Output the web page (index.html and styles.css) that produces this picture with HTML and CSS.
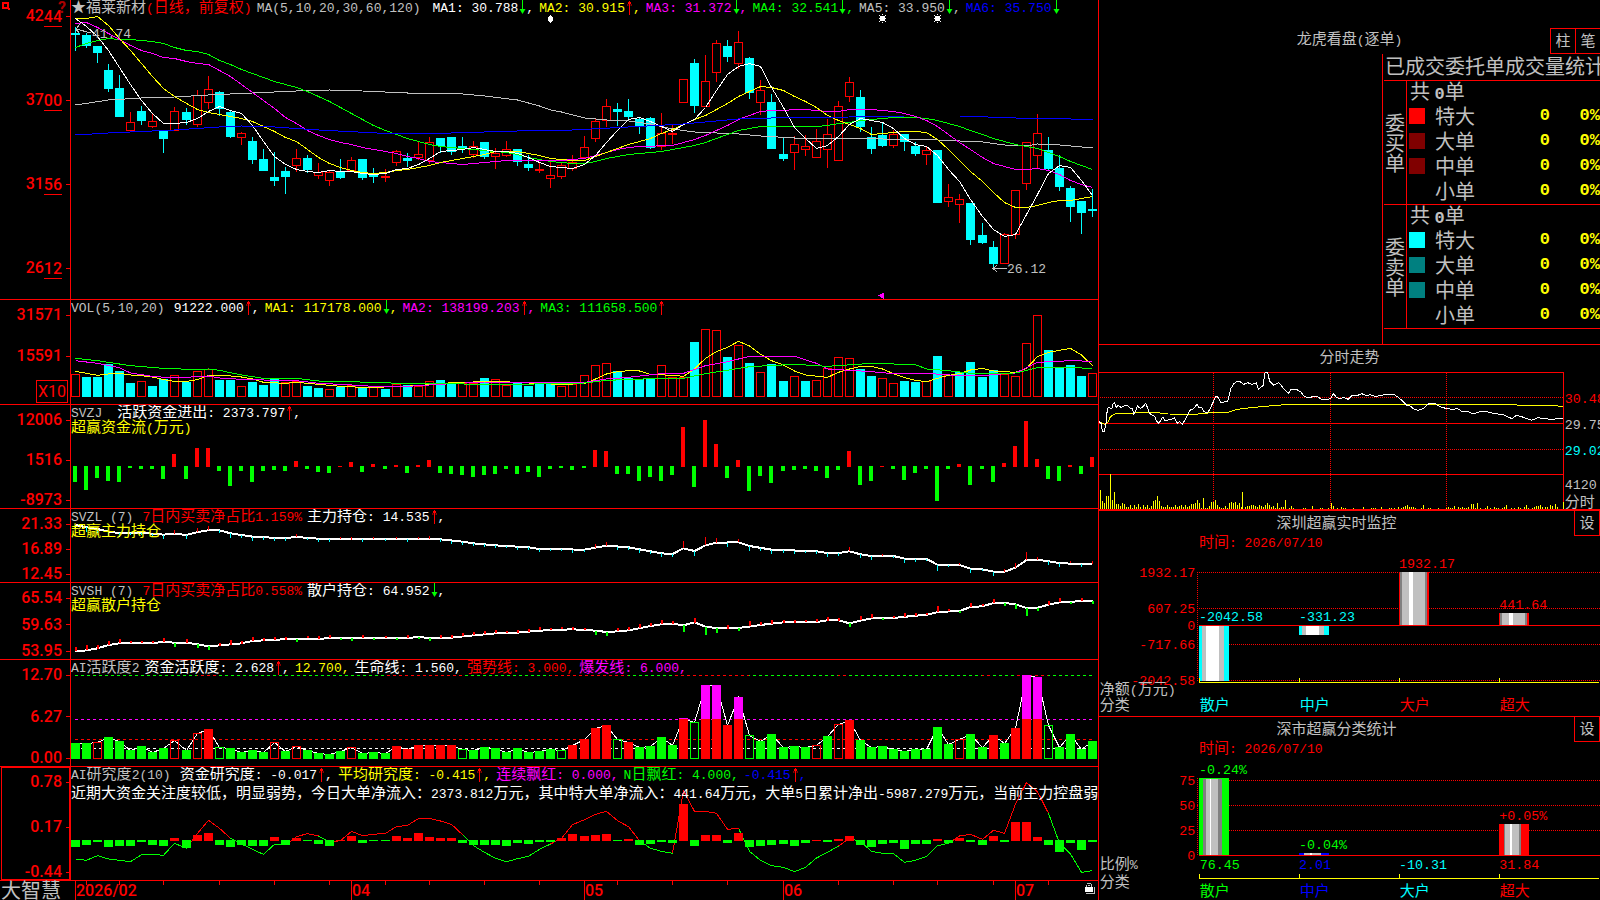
FILE: index.html
```html
<!DOCTYPE html>
<html lang="zh-CN">
<head>
<meta charset="utf-8">
<title>福莱新材</title>
<link rel="stylesheet" href="styles.css">
</head>
<body>
<svg class="defs" aria-hidden="true">
  <symbol id="up" viewBox="0 0 8 16"><path d="M4.500 1v14M3 2.500h3M2 5h1.500M5.500 5h1.500M3 3.500h3" stroke="#f00" fill="none"/></symbol>
  <symbol id="down" viewBox="0 0 8 16"><path d="M4.500 0v13" stroke="#0f0"/><path d="M1.500 9h6l-3 5z" fill="#0f0"/></symbol>
</svg>
<main class="terminal">
  <section class="charts">
    <article class="panel">
      <div class="axis axis-price">
        <svg class="corner" viewBox="0 0 9 9"><path d="M2 2h5v5H2zM7 8h2" fill="none" stroke="#f00" stroke-width="2"/></svg>
        <span class="help">?</span>
        <span class="tick">42<u>44</u></span><span class="tick">37<u>00</u></span><span class="tick">31<u>56</u></span><span class="tick">26<u>12</u></span>
      </div>
      <svg class="plot" id="price" viewBox="71 0 1027 299" preserveAspectRatio="none"></svg>
      <header class="legend">
        <span class="silver stock"><b class="z">★福莱新材</b><i class="red">(<b class="z">日线，前复权</b>)</i></span>
        <span class="silver name">MA(5,10,20,30,60,120)</span>
        <span class="white">MA1: 30.788<svg class="arrow"><use href="#down"/></svg>,</span>
        <span class="yellow">MA2: 30.915<svg class="arrow"><use href="#up"/></svg>,</span>
        <span class="magenta">MA3: 31.372<svg class="arrow"><use href="#down"/></svg>,</span>
        <span class="green">MA4: 32.541<svg class="arrow"><use href="#down"/></svg>,</span>
        <span class="silver">MA5: 33.950<svg class="arrow"><use href="#down"/></svg>,</span>
        <span class="blue">MA6: 35.750<svg class="arrow"><use href="#down"/></svg></span>
      </header>
    </article>
    <article class="panel">
      <div class="axis axis-volume"><span class="tick">31571</span><span class="tick">15591</span><span class="unit">X10</span></div>
      <svg class="plot" id="volume" viewBox="71 300 1027 104" preserveAspectRatio="none"></svg>
      <header class="legend">
        <span class="silver name">VOL(5,10,20)</span>
        <span class="white">91222.000<svg class="arrow"><use href="#up"/></svg>,</span>
        <span class="yellow">MA1: 117178.000<svg class="arrow"><use href="#down"/></svg>,</span>
        <span class="magenta">MA2: 138199.203<svg class="arrow"><use href="#up"/></svg>,</span>
        <span class="green">MA3: 111658.500<svg class="arrow"><use href="#up"/></svg></span>
      </header>
    </article>
    <article class="panel">
      <div class="axis"><span class="tick">12006</span><span class="tick">1516</span><span class="tick">-8973</span></div>
      <svg class="plot" id="flow" viewBox="71 405 1027 103" preserveAspectRatio="none"></svg>
      <header class="legend">
        <span class="silver name wide">SVZJ</span>
        <span class="white"><b class="z">活跃资金进出</b>: 2373.797<svg class="arrow"><use href="#up"/></svg>,</span>
        <span class="sub yellow"><b class="z">超赢资金流</b>(<b class="z">万元</b>)</span>
      </header>
    </article>
    <article class="panel">
      <div class="axis"><span class="tick">21.33</span><span class="tick">16.89</span><span class="tick">12.45</span></div>
      <svg class="plot" id="main" viewBox="71 509 1027 73" preserveAspectRatio="none"></svg>
      <header class="legend">
        <span class="silver name">SVZL (7)</span>
        <span class="red">7<b class="z">日内买卖净占比</b>1.159%</span>
        <span class="white"><b class="z">主力持仓</b>: 14.535<svg class="arrow"><use href="#up"/></svg>,</span>
        <span class="sub yellow"><b class="z">超赢主力持仓</b></span>
      </header>
    </article>
    <article class="panel">
      <div class="axis"><span class="tick">65.54</span><span class="tick">59.63</span><span class="tick">53.95</span></div>
      <svg class="plot" id="retail" viewBox="71 583 1027 76" preserveAspectRatio="none"></svg>
      <header class="legend">
        <span class="silver name">SVSH (7)</span>
        <span class="red">7<b class="z">日内买卖净占比</b>0.558%</span>
        <span class="white"><b class="z">散户持仓</b>: 64.952<svg class="arrow"><use href="#down"/></svg>,</span>
        <span class="sub yellow"><b class="z">超赢散户持仓</b></span>
      </header>
    </article>
    <article class="panel">
      <div class="axis"><span class="tick">12.70</span><span class="tick">6.27</span><span class="tick">0.00</span></div>
      <svg class="plot" id="active" viewBox="71 660 1027 106" preserveAspectRatio="none"></svg>
      <header class="legend">
        <span class="silver">AI<b class="z">活跃度</b>2</span>
        <span class="white"><b class="z">资金活跃度</b>: 2.628<svg class="arrow"><use href="#up"/></svg>,</span>
        <span class="yellow">12.700,</span>
        <span class="white"><b class="z">生命线</b>: 1.560,</span>
        <span class="red"><b class="z">强势线</b>: 3.000,</span>
        <span class="magenta"><b class="z">爆发线</b>: 6.000,</span>
      </header>
    </article>
    <article class="panel">
      <div class="axis selected"><span class="tick">0.78</span><span class="tick">0.17</span><span class="tick">-0.44</span></div>
      <svg class="plot" id="research" viewBox="71 767 1027 113" preserveAspectRatio="none"></svg>
      <header class="legend">
        <span class="silver name">AI<b class="z">研究度</b>2(10)</span>
        <span class="white"><b class="z">资金研究度</b>: -0.017<svg class="arrow"><use href="#up"/></svg>,</span>
        <span class="yellow"><b class="z">平均研究度</b>: -0.415<svg class="arrow"><use href="#up"/></svg>,</span>
        <span class="magenta"><b class="z">连续飘红</b>: 0.000,</span>
        <span class="green">N<b class="z">日飘红</b>: 4.000,</span>
        <span class="blue">-0.415<svg class="arrow"><use href="#up"/></svg>,</span>
        <p class="sub note white"><b class="z">近期大资金关注度较低，明显弱势，今日大单净流入：</b>2373.812<b class="z">万元，其中特大单净流入：</b>441.64<b class="z">万元，大单</b>5<b class="z">日累计净出</b>-5987.279<b class="z">万元，当前主力控盘弱</b></p>
      </header>
    </article>
    <footer class="timeline">
      <span class="brand">大智慧</span>
      <svg class="plot" id="dates" viewBox="71 881 1027 19" preserveAspectRatio="none"></svg>
    </footer>
  </section>

  <aside class="side">
    <section class="orders">
      <header class="orders-head">
        <h2><b class="z">龙虎看盘</b>(<b class="z">逐单</b>)</h2>
        <div class="buttons"><button type="button">柱</button><button type="button">笔</button></div>
      </header>
      <div class="stats">
        <h3>已成交委托单成交量统计</h3>
        <table>
          <tbody>
            <tr><th rowspan="5" class="group">委买单</th><td colspan="4" class="total">共 <b>0</b>单</td></tr>
            <tr><td class="sw"><i class="swatch s-red"></i></td><td>特大</td><td class="num">0</td><td class="num">0%</td></tr>
            <tr><td class="sw"><i class="swatch s-dark"></i></td><td>大单</td><td class="num">0</td><td class="num">0%</td></tr>
            <tr><td class="sw"><i class="swatch s-dark"></i></td><td>中单</td><td class="num">0</td><td class="num">0%</td></tr>
            <tr class="last"><td></td><td>小单</td><td class="num">0</td><td class="num">0%</td></tr>
          </tbody>
          <tbody>
            <tr><th rowspan="5" class="group">委卖单</th><td colspan="4" class="total">共 <b>0</b>单</td></tr>
            <tr><td class="sw"><i class="swatch s-cyan"></i></td><td>特大</td><td class="num">0</td><td class="num">0%</td></tr>
            <tr><td class="sw"><i class="swatch s-teal"></i></td><td>大单</td><td class="num">0</td><td class="num">0%</td></tr>
            <tr><td class="sw"><i class="swatch s-teal"></i></td><td>中单</td><td class="num">0</td><td class="num">0%</td></tr>
            <tr class="last"><td></td><td>小单</td><td class="num">0</td><td class="num">0%</td></tr>
          </tbody>
        </table>
      </div>
    </section>

    <section class="intraday">
      <h2 class="z">分时走势</h2>
      <svg class="chart" viewBox="12 93 1503 414" preserveAspectRatio="none">
        <g class="grid"><path d="M12 97.500H1405.500V507M12 250.500H1405M12 403.500H1405"/></g>
        <g class="dots"><path d="M15 172.500H1405M15 328.500H1405M355.500 99V507M706.500 99V507M1054.500 99V507"/></g>
        <g id="ticks" class="vol"></g>
        <polyline class="l yellow-l" points="12,245 24,250 32,254 40,244 46,230 60,222 80,221 110,220 130,217 180,217 220,222 300,223 350,218 400,217 420,210 440,206 500,200 580,193 760,192 1000,192 1250,194 1300,197 1380,197 1404,200"/>
        <polyline class="l white-l" points="12,245 18,250 22,274 28,274 34,245 37,205 42,203 50,207 54,193 58,188 64,202 70,196 78,202 88,197 98,197 106,206 112,206 116,222 122,212 127,198 136,205 144,200 152,190 157,202 164,220 172,226 180,230 184,242 192,250 204,230 210,242 230,237 238,234 246,250 254,245 262,252 270,240 278,224 286,210 296,206 306,192 312,204 320,203 326,214 336,219 342,212 350,196 362,170 368,171 378,188 398,184 404,160 408,145 416,132 424,125 434,124 446,133 458,128 470,133 484,129 490,148 504,137 510,98 518,98 524,124 536,135 552,128 566,146 580,160 588,149 606,149 618,156 628,170 640,173 664,168 680,178 696,180 708,174 716,160 724,172 735,176 746,172 760,178 772,166 784,168 800,161 816,167 826,164 842,170 858,166 870,164 896,163 910,172 926,186 936,196 946,198 956,207 970,211 984,206 1000,192 1020,190 1034,200 1056,206 1074,208 1088,206 1102,215 1122,216 1136,222 1152,216 1176,215 1196,220 1224,224 1236,230 1252,236 1264,226 1280,230 1296,236 1310,241 1328,233 1350,236 1370,238 1388,236 1404,236"/>
        <g class="t">
          <text x="1409" y="188" fill="#f00">30.48</text><text x="1409" y="266" fill="#c0c0c0">29.75</text><text x="1409" y="344" fill="#0ff">29.02</text>
          <text x="1409" y="446" fill="#c0c0c0">4120</text><text x="1409" y="500" class="cn" fill="#c0c0c0">分时</text>
        </g>
      </svg>
    </section>

    <section class="monitor">
      <header class="mon-head"><h2 class="z">深圳超赢实时监控</h2><button type="button">设</button></header>
      <p class="when"><b class="z">时间</b>: 2026/07/10</p>
      <svg class="chart" viewBox="12 135 1503 483" preserveAspectRatio="none">
        <g class="dots"><path d="M306 187.500H1515M306 295.500H1515M306 403.500H1515M306 511.500H1515M307.500 187V511"/></g>
        <g>
          <path fill="#0ff" d="M312 348h90v165h-90zM612 348h90v27h-90z"/>
          <path fill="#c0c0c0" d="M321 348h66v165h-66zM621 348h66v27h-66z"/>
          <path fill="#fff" d="M333 348h39v165h-39zM633 348h39v27h-39z"/>
          <path fill="#f00" d="M912 186h90v160h-90zM1212 309h90v37h-90z"/>
          <path fill="#808080" d="M915 186h81v160h-81zM1215 309h81v37h-81z"/>
          <path fill="#c0c0c0" d="M921 186h69v160h-69zM1221 309h69v37h-69z"/>
          <path fill="#fff" d="M942 186h12v160h-12zM1242 309h12v37h-12z"/>
        </g>
        <g class="grid"><path d="M312 346.500H1515"/></g>
        <path class="l yellow-l" d="M313.500 504V517.500H1512M613.500 504v13M913.500 504v13M1213.500 504v13"/>
        <g class="t">
          <g fill="#f00" text-anchor="end"><text x="301" y="202">1932.17</text><text x="301" y="309">607.25</text><text x="301" y="361">0</text><text x="301" y="417">-717.66</text><text x="301" y="526">-2042.58</text></g>
          <g fill="#0ff"><text x="312" y="334">-2042.58</text><text x="612" y="334">-331.23</text><text class="cn" x="314" y="600">散户</text><text class="cn" x="614" y="600">中户</text></g>
          <g fill="#f00"><text x="912" y="175">1932.17</text><text x="1213" y="298">441.64</text><text class="cn" x="914" y="600">大户</text><text class="cn" x="1214" y="600">超大</text></g>
          <g fill="#c0c0c0" class="cn"><text x="14" y="553">净额<tspan class="en">(</tspan>万元<tspan class="en">)</tspan></text><text x="14" y="600">分类</text></g>
        </g>
      </svg>
    </section>

    <section class="monitor">
      <header class="mon-head"><h2 class="z">深市超赢分类统计</h2><button type="button">设</button></header>
      <p class="when"><b class="z">时间</b>: 2026/07/10</p>
      <svg class="chart" viewBox="12 753 1503 417" preserveAspectRatio="none">
        <g class="dots"><path d="M306 811.500H1515M306 886.500H1515M306 961.500H1515M307.500 804V1036"/></g>
        <g>
          <path fill="#0f0" d="M312 804h90v232h-90z"/><path fill="#808080" d="M324 807h57v229h-57z"/><path fill="#c0c0c0" d="M333 807h36v229h-36z"/><path fill="#fff" d="M345 807h4v229h-4z"/>
          <path fill="#00f" d="M612 1029h90v7h-90z"/><path fill="#c0c0c0" d="M627 1029h51v7h-51z"/><path fill="#fff" d="M645 1029h6v7h-6z"/>
          <path fill="#f00" d="M1212 942h90v94h-90z"/><path fill="#808080" d="M1227 942h51v94h-51z"/><path fill="#c0c0c0" d="M1230 942h42v94h-42z"/><path fill="#fff" d="M1245 942h6v94h-6z"/>
        </g>
        <g class="grid"><path d="M312 1036.500H1515"/></g>
        <path class="l yellow-l" d="M313.500 1092V1105.500H1512M613.500 1092v13M913.500 1092v13M1213.500 1092v13"/>
        <g class="t">
          <g fill="#f00" text-anchor="end"><text x="301" y="826">75</text><text x="301" y="901">50</text><text x="301" y="976">25</text><text x="301" y="1051">0</text></g>
          <g fill="#0f0"><text x="312" y="792">-0.24%</text><text x="612" y="1018">-0.04%</text><text x="314" y="1078">76.45</text><text class="cn" x="314" y="1158">散户</text></g>
          <g fill="#00f"><text x="612" y="1078">2.01</text><text class="cn" x="614" y="1158">中户</text></g>
          <g fill="#0ff"><text x="912" y="1078">-10.31</text><text class="cn" x="914" y="1158">大户</text></g>
          <g fill="#f00"><text x="1213" y="930">+0.05%</text><text x="1213" y="1078">31.84</text><text class="cn" x="1214" y="1158">超大</text></g>
          <g fill="#c0c0c0" class="cn"><text x="14" y="1078">比例<tspan class="en">%</tspan></text><text x="14" y="1131">分类</text></g>
        </g>
      </svg>
    </section>
  </aside>
</main>
<script src="charts.js"></script>
</body>
</html>
```

FILE: styles.css
```css
* { box-sizing: border-box; }
body {
  margin: 0;
  background: #000;
  color: #c0c0c0;
  font: 13px/18px "Liberation Mono", "Noto Sans CJK SC", monospace;
  overflow: hidden;
}
h2, h3, p { margin: 0; font-weight: normal; font-size: 13px; }
i { font-style: normal; }
.defs { display: none; }
.z { font: 15px/1px "Noto Sans CJK SC", sans-serif; }
h2.z { font-size: 15px; }

.terminal {
  display: grid;
  grid-template-columns: minmax(0, 1099fr) minmax(0, 501fr);
  height: 100vh;
}

/* indicator panels */
.charts {
  display: grid;
  grid-template-rows: 300fr 105fr 104fr 74fr 77fr 107fr 114fr 19fr;
  border-right: 1px solid #f00;
  min-width: 0;
}
.panel {
  display: grid;
  grid-template: minmax(0, 1fr) / 71px minmax(0, 1fr);
  border-bottom: 1px solid #f00;
  min-height: 0;
}
.axis {
  position: relative;
  display: flex;
  flex-direction: column;
  align-items: flex-end;
  justify-content: space-between;
  padding-top: 7px;
  border-right: 1px solid #f00;
  color: #f00;
  font: 500 16px/16px Roboto, "Liberation Sans", sans-serif;
}
.axis-price { padding: 8px 0 23px; }
.axis-volume { justify-content: flex-start; }
.axis-volume .tick { margin-bottom: 25px; }
.axis-volume .tick + .tick { margin-bottom: 16px; }
.tick { display: flex; align-items: center; height: 16px; }
.tick::after {
  content: "";
  width: 4px;
  height: 1px;
  margin-left: 4px;
  background: #f00;
}
.tick u { text-decoration: none; border-bottom: 1px solid #f00; line-height: 18px; margin-top: 3px; }
.unit { height: 23px; padding: 0 1px; border: 1px solid #f00; margin-right: 2px; line-height: 22px; font-weight: normal; }
.selected { box-shadow: inset 0 0 0 1px #f00; margin-left: 1px; }
.corner { position: absolute; left: 1px; top: 1px; width: 9px; height: 9px; }
.help { position: absolute; right: 4px; top: 0; color: #a00; font-weight: bold; }
.plot { grid-area: 1 / 2; width: 100%; height: 100%; min-height: 0; display: block; }
.plot, .chart { shape-rendering: crispEdges; }
.legend {
  grid-area: 1 / 2;
  display: flex;
  flex-wrap: wrap;
  align-content: flex-start;
  column-gap: 5px;
  white-space: nowrap;
  overflow: hidden;
  z-index: 1;
}
.legend > span { height: 15px; }
.legend .name { margin-right: 4px; }
.legend .stock + .name { margin-right: 7px; }
.legend .wide { margin-right: 10px; }
.legend .sub { flex-basis: 100%; }
.legend .note { margin-top: 4px; }
.arrow { width: 8px; height: 16px; vertical-align: top; }
.silver { color: #c0c0c0; }
.white { color: #fff; }
.yellow { color: #ff0; }
.magenta { color: #f0f; }
.green { color: #0f0; }
.blue { color: #00f; }
.red { color: #f00; }

.timeline { display: grid; grid-template: minmax(0, 1fr) / 71px minmax(0, 1fr); }
.brand { font: 20px/18px "Noto Sans CJK SC", sans-serif; padding-left: 1px; }
.month { font: 500 16px Roboto, "Liberation Sans", sans-serif; fill: #f00; }
.mark { font: 13px "Liberation Mono", monospace; fill: #c0c0c0; }

/* right column */
.side { display: grid; grid-template-rows: 345fr 166fr 206fr 183fr; min-width: 0; }
.side section { min-height: 0; min-width: 0; overflow: hidden; border-bottom: 1px solid #f00; }
.side section:last-child { border-bottom: 0; }
.side h2 { text-align: center; }
button {
  width: 26px;
  height: 26px;
  padding: 0 0 2px;
  border: 1px solid #f00;
  background: #000;
  color: #c0c0c0;
  font: 15px/20px "Noto Sans CJK SC", sans-serif;
}
.orders { display: flex; flex-direction: column; }
.orders-head { display: grid; grid-template-columns: 1fr auto 1fr; align-items: center; padding-top: 28px; }
.orders-head h2 { grid-column: 2; }
.buttons { justify-self: end; display: flex; }
.buttons button { width: 25px; border-right: 0; }
.stats { flex: 1; width: 218px; margin-left: auto; padding-left: 1px; border-left: 1px solid #f00; }
.stats h3 {
  font: 20px/23px "Noto Sans CJK SC", sans-serif;
  height: 27px;
  padding-left: 1px;
  white-space: nowrap;
  overflow: hidden;
  border-bottom: 1px solid #f00;
}
.stats table { width: 100%; border-spacing: 0; font: 20px/20px "Noto Sans CJK SC", sans-serif; }
.stats td { height: 25px; padding: 0; vertical-align: top; white-space: nowrap; }
.stats .last td { height: 24px; }
.stats .last td, .stats .group { border-bottom: 1px solid #f00; }
.stats .group { width: 22px; padding: 0 1px; border-right: 1px solid #f00; font-weight: normal; line-height: 20px; }
.stats .total { padding-left: 3px; }
.stats .total b { font: bold 17px/1px "Liberation Mono", monospace; }
.stats .sw { width: 28px; padding: 2px 0 0 2px; }
.swatch { display: block; width: 16px; height: 16px; }
.s-red { background: #f00; }
.s-dark { background: #800000; }
.s-cyan { background: #0ff; }
.s-teal { background: #008080; }
.stats .num { color: #ff0; text-align: right; font: bold 17px/20px "Liberation Mono", monospace; }
.stats .num:last-child { width: 50px; }

.side .intraday { display: flex; flex-direction: column; border-bottom-width: 2px; }
.intraday h2 { height: 26px; line-height: 22px; }
.chart { flex: 1; width: 100%; min-height: 0; display: block; }
.grid path { stroke: #f00; stroke-width: 3; fill: none; }
.dots path { stroke: #f00; stroke-width: 3; stroke-dasharray: 3 3; fill: none; }
.l { fill: none; stroke-width: 3; }
.yellow-l { stroke: #ff0; }
.white-l { stroke: #fff; }
.vol path { stroke: #ff0; stroke-width: 3; }
.t { font: 40px "Liberation Mono", "Noto Sans CJK SC", monospace; }
.cn { font-size: 45px; }
.en { font-size: 40px; }
.monitor { display: flex; flex-direction: column; }
.mon-head { display: flex; height: 24px; }
.mon-head h2 { flex: 1; line-height: 22px; }
.mon-head button { border-top: 0; height: 25px; }
.when { height: 20px; padding-left: 100px; color: #f00; line-height: 18px; }
```

FILE: charts.js
```js
const X0 = 75, STEP = 11.055;
const RED = '#f00', CYAN = '#0ff', GREEN = '#0f0', MAG = '#f0f';
const cx = i => Math.round(X0 + STEP * i);
const rect = (x, y, w, h, c) => `<rect x="${x}" y="${y}" width="${w}" height="${h}" fill="${c}"/>`;
const box = (x, y, w, h, c) => `<rect x="${x + .5}" y="${y + .5}" width="${w - 1}" height="${Math.max(1, h - 1)}" fill="none" stroke="${c}"/>`;
const line = (pts, c, w = 1, extra = '') => `<polyline points="${pts.map(p => p.join()).join(' ')}" fill="none" stroke="${c}" stroke-width="${w}" ${extra}/>`;
const put = (id, s) => { document.getElementById(id).innerHTML = s; };

// "index:value" pairs; values between are interpolated
const curve = (s, base = 0, k = 1) => s.trim().split(/\s+/).map(p => {
  const [i, v] = p.split(':').map(Number);
  return [cx(i) + .5, base + v / k];
});
const seq = s => s.split(',').map((v, i) => [cx(i) + .5, +v + .5]);
const sample = (s, base, k) => {
  const a = s.trim().split(/\s+/).map(p => p.split(':').map(Number)), out = [];
  for (let n = 0; n < a.length - 1; n++)
    for (let i = a[n][0]; i < a[n + 1][0]; i++)
      out[i] = base + (a[n][1] + (a[n + 1][1] - a[n][1]) * (i - a[n][0]) / (a[n + 1][0] - a[n][0])) / k;
  out.push(base + a[a.length - 1][1] / k);
  return out;
};

// high, low, body top, body bottom
const candles = `c27,51,33,35 c33,48,35,46 c46,63,46,53 c64,92,70,89 c75,117,88,117 r112,131,122,131 c106,125,111,121 r114,128,121,127 c130,153,130,139 r107,131,111,131
c108,125,112,120 r90,127,95,125 r76,109,89,103 c91,116,92,109 c111,138,112,137 r132,145,133,138 c137,164,141,160 c149,171,159,171 c152,186,177,181 c167,194,171,177
r149,172,158,166 c155,173,158,170 r163,179,172,176 r170,186,172,181 c159,179,171,178 r157,171,160,171 c159,180,159,178 c168,183,175,177 r169,182,176,178 r150,166,151,163
c153,167,158,161 r141,160,154,158 r137,164,142,161 c138,153,138,146 c137,155,137,152 c137,153,146,148 r141,158,146,155 c142,159,142,157 r148,169,153,157 r141,157,149,156
c149,166,149,162 c155,171,164,168 r162,173,169,171 r162,188,175,179 r163,179,165,177 r155,171,162,169 r136,158,147,158 r118,142,121,139 r99,127,106,121 c103,126,109,112
c99,121,111,117 c118,134,119,126 c117,149,118,148 r113,150,133,147 r125,144,133,135 r79,103,79,103 c59,113,63,106 r55,107,81,107 r40,82,43,73 c40,62,46,57
r31,69,42,64 c57,99,58,93 r80,115,90,103 c94,149,102,149 c138,161,154,159 r136,170,144,153 r135,156,146,150 r129,158,141,158 r119,168,134,150 r101,161,106,161
r77,102,82,97 c90,132,97,127 c127,154,137,149 c122,147,135,146 r130,148,134,146 c134,151,134,142 c142,156,146,154 r147,165,150,155 c150,203,150,203 r184,207,197,202
r194,223,199,205 c203,245,203,240 c223,244,235,243 c241,268,247,264 r233,264,234,264 r190,239,190,235 r142,190,142,184 r114,169,133,156 c137,170,150,169 c155,191,168,187
c186,222,188,207 c201,234,201,213 c189,217,209,211`.trim().split(/\s+/);
let s = '';
candles.forEach((t, i) => {
  const [h, l, a, b] = t.slice(1).split(',').map(Number), x = cx(i);
  if (t[0] === 'c') s += rect(x, h, 1, l - h, CYAN) + rect(x - 4, a, 9, b - a, CYAN);
  else s += rect(x, h, 1, a - h, RED) + rect(x, b, 1, l - b, RED) + (b - a < 3 ? rect(x - 4, a, 9, b - a, RED) : box(x - 4, a, 9, b - a, RED));
});
const ma5 = '18,26,36,50,67,84,100,113,123,123,122,118,111,106,110,113,125,141,156,164,169,171,172,170,171,171,173,174,173,169,168,164,158,151,150,149,147,149,151,151,153,157,162,166,167,168,164,155,142,130,119,117,121,126,131,124,119,107,90,74,66,63,66,87,107,127,138,148,145,136,124,118,120,122,128,138,144,146,155,169,181,199,216,229,236,234,214,194,173,165,167,180,195';
const ma10 = '18,18,16,25,38,50,63,76,88,96,103,109,112,114,116,118,121,126,131,137,141,149,157,163,167,170,172,173,172,170,169,167,165,162,160,158,156,154,151,151,151,153,155,158,159,160,160,156,152,148,144,141,138,133,129,124,119,115,109,103,96,91,86,87,90,96,101,107,115,120,124,128,134,133,132,131,131,132,139,149,160,171,181,192,202,207,207,205,202,200,200,198,196';
const ma20 = '23,22,27,33,39,45,50,53,57,58,61,63,64,70,76,84,92,100,108,117,123,130,135,139,142,144,147,149,151,153,156,158,161,162,163,164,163,162,161,160,160,160,160,160,160,159,158,155,152,149,147,146,146,145,145,142,139,135,130,125,119,115,111,110,110,109,109,110,111,111,109,109,109,110,111,113,116,120,126,134,142,149,157,163,166,169,169,168,170,174,180,184,187';
const ma30 = '47,43,40,38,39,39,40,41,43,47,50,51,54,60,64,69,73,77,81,84,87,91,96,101,107,113,119,125,130,134,138,141,144,146,147,148,149,150,151,152,154,157,159,161,162,163,163,161,158,156,154,153,152,151,149,147,145,142,138,134,130,128,126,126,126,126,126,126,125,123,122,120,119,118,117,117,117,118,120,123,126,130,134,138,141,144,146,148,152,156,161,165,169';
s += line(curve('0:105 3:100 6:98 9:97 12:95 16:93 20:91 23:90 26:91 30:93 34:93 37:96 40:100 42:106 43:110 44:112 46:118 48:120 50:121 52:124 54:129 56:132 58:133 60:134 62:136 65:138 70:138 73:139 78:140 82:142 84:145 86:146 87:144 89:145 91:147 92:148'), '#c0c0c0');
s += line(seq(ma30), GREEN) + line(seq(ma20), MAG) + line(seq(ma10), '#ff0') + line(seq(ma5), '#fff');
s += line(curve('0:135 3:133 9:130 13:127 15:126 18:127 22:130 29:134 34:133 40:131 45:130 50:127 55:124 60:119 63:118 70:117 75:116 80:116 85:118 90:119 92:120'), '#00f');
s += '<path d="M91 33L76 29M76 29L80 24M76 29L79 33M1007 268.500H993M997 265L993 268.500L997 272" fill="none" stroke="#c0c0c0"/><text class="mark" x="92" y="38">41.74</text><text class="mark" x="1007" y="273">26.12</text>';
s += '<path d="M550 15h1v1h1v1h1v4h-1v1h-1v1h-1v-1h-1v-1h-1v-4h1v-1h1z" fill="#fff"/><path d="M878 295.500l6-3v7z" fill="#f0f"/>';
[882, 937].forEach(x => { s += `<path d="M${x - 2} 16h5v5h-5zM${x - 3} 15h1v1h-1zM${x} 14h1v1h-1zM${x + 3} 15h1v1h-1zM${x - 3} 18h7v1h-7zM${x - 3} 21h1v1h-1zM${x} 22h1v1h-1zM${x + 3} 21h1v1h-1z" fill="#fff"/>`; });
put('price', s);

const vol = [23,20,20,33,26,14,16,11,18,22,15,26,28,17,17,11,15,12,18,15,16,11,9,8,10,12,9,10,8,13,12,11,16,17,14,14,14,19,18,12,15,11,13,13,11,13,22,32,34,26,19,18,19,32,20,20,55,68,67,40,52,34,25,33,16,21,16,17,29,40,39,28,21,19,14,16,15,16,41,22,25,35,20,27,23,21,54,82,47,30,32,21,24];
const volType = 'rccccc rccrc rrccr cccrr ccrcr crcrc rrccr rcrrc cccrr rrrcc ccrrr crrcr crccr crrrr ccrrc crcrc cccrr rrccc cr'.replace(/ /g, '');
s = '';
vol.forEach((h, i) => { s += volType[i] === 'c' ? rect(cx(i) - 4, 397 - h, 9, h, CYAN) : box(cx(i) - 4, 397 - h, 9, h, RED); });
s += line(curve('0:229 1:235 2:241 3:237 4:235 5:240 6:242 7:246 8:254 9:259 10:259 11:254 12:241 13:241 14:243 15:246 16:252 17:262 19:265 20:262 22:268 24:274 26:277 28:276 31:272 33:265 35:262 38:259 40:262 42:266 44:268 46:266 47:252 48:237 49:230 50:227 51:228 52:238 54:241 55:244 56:222 57:190 58:170 59:157 60:139 61:153 62:178 63:197 64:210 65:228 66:240 68:247 69:232 70:222 71:214 72:214 73:222 74:236 75:248 76:256 77:260 78:250 79:241 80:236 81:225 82:220 83:228 85:232 86:220 87:185 88:172 90:160 91:180 92:212', 295, 3), '#ff0');
s += line(curve('0:197 2:205 4:218 5:234 7:244 9:249 12:243 13:249 15:253 18:256 20:257 22:265 24:268 27:274 30:274 34:266 37:261 40:261 43:263 46:262 48:252 50:247 53:236 55:235 57:212 59:200 61:184 65:184 67:205 68:222 70:226 72:230 74:236 77:235 80:242 82:242 84:236 85:234 87:202 90:197 92:199', 295, 3), MAG);
s += line(curve('0:190 2:197 5:212 8:220 11:224 12:222 13:226 15:240 17:250 20:250 22:258 27:262 30:266 40:268 46:264 48:256 53:250 55:250 57:236 59:226 61:215 65:208 68:214 72:205 76:209 77:222 79:227 81:235 85:234 87:218 89:217 92:220', 295, 3), GREEN);
put('volume', s);

const flow = [-16,-24,-12,-15,-16,-2,-3,-3,-13,13,-13,19,19,-5,-20,-5,-16,-5,-4,-5,6,-3,-6,-7,1,5,-6,3,-3,2,-7,2,7,-7,-8,-9,-11,-9,-8,-3,-8,-6,-11,-3,-2,-4,-2,17,16,-8,-8,-15,-11,-15,-9,40,-21,47,23,-12,7,-25,-10,-17,-5,-4,-3,-5,-12,-4,16,-19,-15,1,-3,-14,-7,-3,-35,-3,3,-19,-3,-16,4,21,46,8,-13,-15,2,-8,10];
put('flow', flow.map((v, i) => v > 0 ? rect(cx(i) - 2, 467 - v, 4, v, RED) : rect(cx(i) - 2, 466, 4, -v, GREEN)).join(''));

const holding = (data, base, sign, w, down) => {
  const y = sample(data, base, 3);
  let out = line(y.map((v, i) => [cx(i) + .5, v]), '#fff', 2);
  flow.forEach((f, i) => {
    const len = Math.abs(f) / 8 + 2;
    out += f * sign > 0 ? rect(cx(i), Math.round(y[i] - len), w, Math.round(len), RED) : rect(cx(i), Math.round(y[i]), w, Math.round(len), down);
  });
  return out;
};
put('main', holding('0:690 1:697 2:702 3:710 4:714 6:714 7:716 8:719 9:716 10:720 11:711 12:706 13:706 14:715 16:725 17:727 19:729 20:726 22:731 24:733 33:733 35:740 36:745 38:751 40:755 41:757 42:762 46:764 47:758 48:752 50:757 52:769 53:775 54:777 55:760 56:768 57:751 58:743 60:742 61:753 63:764 67:769 68:774 69:774 70:769 71:778 72:783 74:783 75:791 77:792 78:809 80:810 81:821 82:823 83:830 84:830 85:818 86:795 87:794 88:799 89:804 90:806 92:807', 295, 1, 1, CYAN));
put('retail', holding('0:184 1:181 2:175 3:165 4:160 7:159 8:156 9:158 10:158 11:163 12:169 13:166 14:163 15:160 16:153 18:149 20:147 22:146 24:144 30:144 31:141 32:144 34:143 36:136 38:130 40:128 42:122 44:119 45:118 47:122 48:126 49:124 50:121 52:108 53:103 54:101 55:106 56:97 57:110 58:114 60:114 62:105 64:97 67:96 68:91 69:91 70:100 71:92 72:85 74:84 76:77 77:75 78:66 80:63 81:51 82:49 83:39 84:39 85:43 86:54 87:53 88:44 89:37 90:36 91:32 92:34', 590, -1, 2, GREEN));

const act = [16,16,17,22,18,9,13,7,11,19,9,26,30,12,11,7,9,7,17,8,13,9,6,5,8,12,6,7,6,13,10,14,14,14,14,10,9,12,11,7,11,7,8,10,9,14,20,31,34,20,17,12,13,22,14,41,37,74,74,34,62,24,18,25,12,13,12,14,23,35,39,19,12,13,10,8,10,10,32,15,20,25,12,24,16,31,84,82,34,12,25,10,18];
const actType = 'GGrGGGGGGr GrRgGGGGrG rGGGGrGGGR RRRRRgGGGG GGGGgRRRRg RGGGGRgRRR RgGGGGGrGr RGGGGGGGGG rGGRGRRRgG GGG'.replace(/ /g, '');
const dash = (i, j, y, c) => `<path d="M${cx(i)} ${y}H${cx(j)}" stroke="${c}" stroke-dasharray="3 3" stroke-dashoffset="${(cx(i) - X0) % 6}"/>`;
s = dash(0, 92, 675.5, GREEN);
[[11, 13], [28, 35], [43, 50], [54, 61], [69, 70], [82, 83], [85, 88]].forEach(([a, b]) => { s += rect(cx(a), 675, cx(b) - cx(a), 1, '#000') + dash(a, b, 675.5, RED); });
s += dash(0, 92, 719.5, MAG) + dash(0, 92, 739.5, RED) + dash(0, 92, 748.5, '#fff');
s += line(act.map((h, i) => [cx(i) + .5, 759.5 - h]), '#fff');
act.forEach((h, i) => {
  const t = actType[i], x = cx(i) - 4, c = t === 'G' || t === 'g' ? GREEN : RED;
  s += t === t.toLowerCase() ? box(x, 759 - h, 9, h, c) : rect(x, 759 - h, 9, h, c);
  if (c === RED && h > 40) s += rect(x, 759 - h, 9, h - 40, MAG);
});
put('active', s);

const res = [-7,-5,-2,-7,-6,-6,-2,-5,-6,3,-8,6,8,-5,-7,-5,-6,-6,4,-5,3,-1,-4,-6,1,5,-3,-1,-1,5,3,8,4,3,3,-3,-5,-5,-5,-6,-3,-4,-2,-2,3,7,5,6,7,-1,2,-5,-4,-2,-3,37,-6,6,6,-3,8,-7,-6,-5,-4,-6,-3,1,-2,2,5,-5,-7,-4,-3,-9,-4,-4,2,-3,3,-2,-5,5,-2,19,19,4,-5,-12,-3,-10,-2];
const avg = [807,811,797,807,811,815,794,793,796,760,775,730,691,715,745,762,778,793,763,765,740,731,738,757,752,724,737,733,730,710,706,686,685,693,703,734,767,787,805,815,806,799,778,762,745,704,689,673,664,692,710,752,775,784,790,602,664,664,670,718,715,784,811,827,832,845,832,804,787,768,745,755,784,790,791,817,811,799,767,760,738,733,748,721,730,642,578,605,670,760,792,847,842];
const avgPts = avg.map((v, i) => [cx(i) + .5, 590 + v / 3]);
s = line(avgPts, GREEN);
[[10, 14], [19, 22], [23, 35], [43, 51], [54, 60], [69, 70], [79, 88]].forEach(([a, b]) => { s += line(avgPts.slice(a, b + 1), RED); });
res.forEach((v, i) => { s += v > 0 ? rect(cx(i) - 4, 841 - v, 9, v, RED) : rect(cx(i) - 4, 840, 9, -v, GREEN); });
put('research', s);

s = '';
[1, 4, 8, 13, 18, 23, 28, 32, 37, 42, 49, 54, 59, 69, 74, 78, 83, 88].forEach(i => { s += rect(cx(i), 881, 1, 4, RED); });
[[0, '2026/02'], [25, '04'], [46, '05'], [64, '06'], [85, '07']].forEach(([i, t]) => { s += rect(cx(i), 881, 1, 19, RED) + `<text class="month" x="${cx(i) + 1}" y="896">${t}</text>`; });
s += '<path d="M1085 887h8v5h-8z" fill="#fff"/><path d="M1086.500 887v-2M1087 883.500h4M1091.500 884v3M1088 885.500h2M1094.500 887v6.500h-9" fill="none" stroke="#c0c0c0"/>';
put('dates', s);

// intraday volume, "x:top"
put('ticks', `16:450 22:483 28:489 34:468 40:468 46:402 52:480 58:456 64:492 70:492 76:498 82:490 88:492 94:500 100:500 106:495 112:503 118:495 124:500 130:492 136:500 145:495 151:500 157:495 163:503 169:498 175:484 181:480 187:468 193:484 199:498 205:500 211:500 217:495
223:500 229:500 235:500 241:495 247:500 253:498 259:495 265:500 271:495 277:500 283:498 289:492 295:492 301:488 307:480 313:490 319:503 325:474 331:503 337:503 343:498 349:486 355:486 361:480 367:495 373:500 379:503 385:503 391:498 397:503 403:490 409:486 415:490 421:486 427:495 433:488 439:500 442:456
451:500 457:498 463:498 469:495 475:495 481:498 487:500 493:495 499:498 505:500 511:495 517:488 523:495 529:500 535:498 541:503 547:488 553:503 559:500 565:500 571:480 583:503 589:497 595:503 625:504 631:504 652:498 676:504 682:504 700:503 709:488 715:497 727:503 739:500 745:503 751:503 775:503 805:500 829:503 835:503 841:503
859:500 883:503 889:503 898:503 910:500 919:503 925:500 931:497 937:494 943:500 949:500 955:500 961:503 979:503 985:494 1000:503 1006:503 1030:503 1054:503 1060:500 1066:503 1072:503 1078:498 1090:500 1096:503 1102:500 1108:503 1114:503 1120:500 1129:491 1135:491 1141:503 1147:488 1156:503 1170:503 1177:498 1186:503 1198:500 1204:503
1210:503 1222:503 1228:500 1234:494 1250:503 1258:503 1270:500 1276:503 1288:500 1294:494 1300:503 1312:503 1318:500 1324:498 1330:498 1336:495 1342:500 1350:500 1358:500 1366:494 1372:497 1381:491 1387:500 1405:486`.split(/\s+/).map(p => { const [x, y] = p.split(':'); return `<path d="M${+x + .5} ${y}V507"/>`; }).join(''));
```
